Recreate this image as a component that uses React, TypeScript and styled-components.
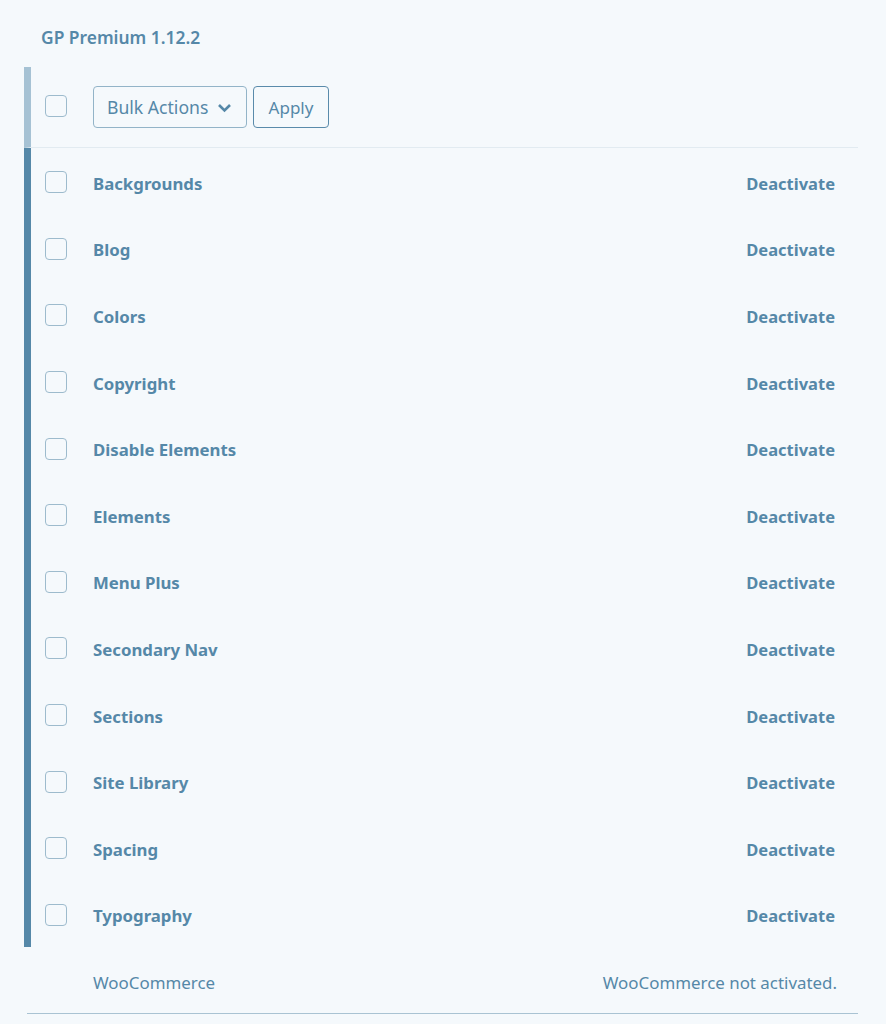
import React from "react";
import styled, {createGlobalStyle} from "styled-components";

const GlobalStyle = createGlobalStyle`
  html, body {
    margin: 0;
    padding: 0;
    background: #f5f9fc;
  }
  body {
    font-family: "Noto Sans", "Open Sans", sans-serif;
    color: #5588a8;
  }
`

const Page = styled.div`
  padding: 24px 28px 8px 24px;
  min-height: 1024px;
  box-sizing: border-box;
`

const Title = styled.h2`
  margin: 0 0 17px 17px;
  font-size: 17.4px;
  line-height: 26px;
  font-weight: 600;
  color: #5588a8;
`

const Table = styled.div`
  display: flex;
  flex-direction: column;
`

const HeaderRow = styled.div`
  display: flex;
  align-items: center;
  height: 81px;
  border-left: 7px solid #a6c2d4;
  border-bottom: 1px solid #e2ebf1;
  box-sizing: border-box;
`

const Row = styled.div<{ $active?: boolean }>`
  display: flex;
  align-items: center;
  height: 66.6px;
  padding-top: 4px;
  box-sizing: border-box;
  border-left: 7px solid ${p => p.$active ? '#5588a8' : 'transparent'};
`

const LastRow = styled.div`
  display: flex;
  align-items: center;
  height: 67px;
  padding: 4px 0 0 4px;
  margin-left: 3px;
  box-sizing: border-box;
  border-bottom: 1px solid #a9c3d3;
`

const CheckCell = styled.div`
  width: 62px;
  padding-left: 14px;
  box-sizing: border-box;
  display: flex;
  align-items: center;
`

const Check = styled.span`
  display: block;
  width: 22px;
  height: 22px;
  border: 1px solid #9dbbcd;
  border-radius: 4px;
  box-sizing: border-box;
  margin-top: -2px;
`

const Name = styled.span<{ $bold?: boolean }>`
  flex: 1;
  font-size: ${p => p.$bold ? 16.8 : 16.9}px;
  font-weight: ${p => p.$bold ? 700 : 400};
  color: #5588a8;
`

const Action = styled.span<{ $bold?: boolean }>`
  padding-right: ${p => p.$bold ? 23 : 21}px;
  font-size: ${p => p.$bold ? 16.5 : 16.9}px;
  font-weight: ${p => p.$bold ? 700 : 400};
  color: #5588a8;
`

const Tools = styled.div`
  display: flex;
  align-items: center;
  gap: 6px;
  margin-top: 0;
`

const Select = styled.div`
  display: flex;
  align-items: center;
  gap: 9px;
  height: 42px;
  width: 154px;
  padding: 0 10px 0 13px;
  box-sizing: border-box;
  border: 1px solid #93b4c8;
  border-radius: 4px;
  font-size: 17.6px;
  color: #5588a8;
`

const Button = styled.div`
  display: flex;
  align-items: center;
  justify-content: center;
  height: 42px;
  width: 76px;
  box-sizing: border-box;
  border: 1px solid #5a8bab;
  border-radius: 4px;
  font-size: 17px;
  color: #5588a8;
`

const modules = [
  'Backgrounds', 'Blog', 'Colors', 'Copyright', 'Disable Elements', 'Elements',
  'Menu Plus', 'Secondary Nav', 'Sections', 'Site Library', 'Spacing', 'Typography'
]

export default function App() {
  return (
    <Page>
      <GlobalStyle/>
      <Title>GP Premium 1.12.2</Title>
      <Table>
        <HeaderRow>
          <CheckCell><Check/></CheckCell>
          <Tools>
            <Select>
              Bulk Actions
              <svg width="15" height="15" viewBox="0 0 15 15">
                <path d="M2 5 L7.5 10.5 L13 5" fill="none" stroke="#5588a8" strokeWidth="2.6"/>
              </svg>
            </Select>
            <Button>Apply</Button>
          </Tools>
        </HeaderRow>
        {modules.map(m => (
          <Row $active key={m}>
            <CheckCell><Check/></CheckCell>
            <Name $bold>{m}</Name>
            <Action $bold>Deactivate</Action>
          </Row>
        ))}
        <LastRow>
          <CheckCell/>
          <Name>WooCommerce</Name>
          <Action>WooCommerce not activated.</Action>
        </LastRow>
      </Table>
    </Page>
  )
}
